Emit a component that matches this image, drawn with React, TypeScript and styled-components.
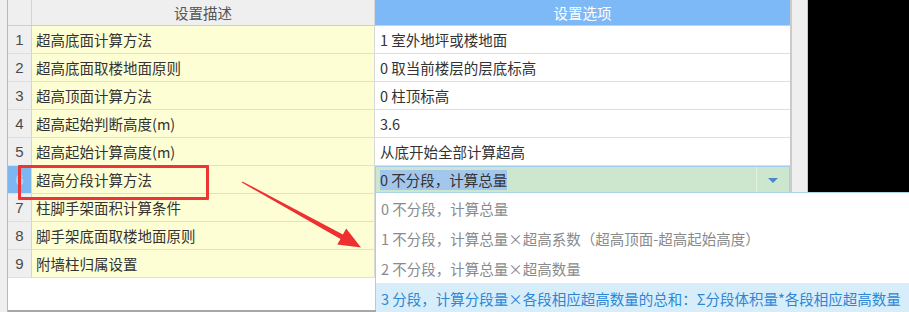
import React from 'react';
import styled, { createGlobalStyle } from 'styled-components';

const GlobalStyle = createGlobalStyle`
	html, body {
		margin: 0;
		padding: 0;
		background: #ffffff;
	}
	body {
		font-family: 'Noto Sans CJK SC', 'Noto Sans', sans-serif;
	}
`;

const Screen = styled.div`
	position: relative;
	width: 909px;
	height: 312px;
	overflow: hidden;
	display: flex;
	background: #ffffff;
	font-size: 14.5px;
	color: #333;
`;

const Gutter = styled.div`
	width: 7px;
	flex-shrink: 0;
	background: #efefef;
	border-right: 1px solid #b9b9b9;
`;

const Table = styled.div`
	width: 782px;
	flex-shrink: 0;
	display: flex;
	flex-direction: column;
	border-right: 2px solid #cbcbcb;
	border-bottom: 2px solid #a8a8a8;
	height: 310px;
`;

const Row = styled.div<{ $head?: boolean }>`
	display: grid;
	grid-template-columns: 24px 343px 1fr;
	height: ${(p) => (p.$head ? 26 : 28)}px;
	box-sizing: border-box;
	border-bottom: 1px solid ${(p) => (p.$head ? '#cfcfcf' : '#dedede')};
`;

const NumCell = styled.div<{ $active?: boolean; $head?: boolean }>`
	display: flex;
	align-items: center;
	justify-content: center;
	background: ${(p) => (p.$active ? '#7db7f1' : '#efefef')};
	color: ${(p) => (p.$active ? '#b9d9f8' : '#4a4a4a')};
	border-right: 1px solid #d4d4d4;
	font-family: 'Liberation Sans', 'Noto Sans CJK SC', sans-serif;
	font-size: 15px;
`;

const DescCell = styled.div<{ $head?: boolean }>`
	display: flex;
	align-items: center;
	justify-content: ${(p) => (p.$head ? 'center' : 'flex-start')};
	padding-left: ${(p) => (p.$head ? 0 : 4)}px;
	background: ${(p) => (p.$head ? '#efefef' : '#fefed5')};
	color: ${(p) => (p.$head ? '#555' : '#333')};
	border-right: 1px solid #d8d8d8;
	white-space: nowrap;
`;

const OptCell = styled.div<{ $head?: boolean }>`
	display: flex;
	align-items: center;
	justify-content: ${(p) => (p.$head ? 'center' : 'flex-start')};
	padding-left: ${(p) => (p.$head ? 0 : 5)}px;
	background: ${(p) => (p.$head ? '#7cb9f6' : '#ffffff')};
	color: ${(p) => (p.$head ? '#ffffff' : '#333')};
	white-space: nowrap;
`;

const EditCell = styled.div`
	display: flex;
	align-items: stretch;
	background: #cde7cf;
	border: 1px solid #a5cdef;
	margin-bottom: -1px;
`;

const EditText = styled.div`
	flex: 1;
	display: flex;
	align-items: center;
	padding-left: 4px;
`;

const Selected = styled.span`
	background: #a3c6ec;
	color: #333;
	line-height: 20px;
`;

const DropButton = styled.div`
	width: 32px;
	display: flex;
	align-items: center;
	justify-content: center;
	border-left: 1px solid #e2efe2;
`;

const Caret = styled.div`
	width: 0;
	height: 0;
	border-left: 5px solid transparent;
	border-right: 5px solid transparent;
	border-top: 5px solid #4d86c6;
`;

const Filler = styled.div`
	flex: 1;
	background: #ffffff;
`;

const ScrollStrip = styled.div`
	width: 15px;
	flex-shrink: 0;
	background: #efefef;
	border-right: 1px solid #c8c8c8;
`;

const Outside = styled.div`
	flex: 1;
	background: #000000;
`;

const Dropdown = styled.div`
	position: absolute;
	left: 375px;
	top: 192px;
	right: 0;
	bottom: 2px;
	background: #ffffff;
	border-left: 1px solid #a8cdee;
	border-top: 1px solid #a8d4ec;
	display: flex;
	flex-direction: column;
`;

const Item = styled.div<{ $hot?: boolean }>`
	height: 30px;
	flex-shrink: 0;
	display: flex;
	align-items: center;
	padding-left: 5px;
	white-space: nowrap;
	background: ${(p) => (p.$hot ? '#d7eefa' : 'transparent')};
	color: ${(p) => (p.$hot ? '#2f86d4' : '#8a8a8a')};
`;

const Callout = styled.div`
	position: absolute;
	left: 18px;
	top: 165px;
	width: 191px;
	height: 35px;
	box-sizing: border-box;
	border: 3px solid #ee3535;
	border-radius: 1px;
`;

const ArrowLayer = styled.svg`
	position: absolute;
	left: 0;
	top: 0;
	pointer-events: none;
`;

type Setting = {
	name: string;
	value: string;
};

const settings: Setting[] = [
	{ name: '超高底面计算方法', value: '1 室外地坪或楼地面' },
	{ name: '超高底面取楼地面原则', value: '0 取当前楼层的层底标高' },
	{ name: '超高顶面计算方法', value: '0 柱顶标高' },
	{ name: '超高起始判断高度(m)', value: '3.6' },
	{ name: '超高起始计算高度(m)', value: '从底开始全部计算超高' },
	{ name: '超高分段计算方法', value: '0 不分段，计算总量' },
	{ name: '柱脚手架面积计算条件', value: '' },
	{ name: '脚手架底面取楼地面原则', value: '' },
	{ name: '附墙柱归属设置', value: '' },
];

const options = [
	'0 不分段，计算总量',
	'1 不分段，计算总量×超高系数（超高顶面-超高起始高度）',
	'2 不分段，计算总量×超高数量',
	'3 分段，计算分段量×各段相应超高数量的总和：Σ分段体积量*各段相应超高数量',
];

const ACTIVE = 5;

export default function App() {
	return (
		<>
			<GlobalStyle />
			<Screen>
				<Gutter />
				<Table>
					<Row $head>
						<NumCell $head />
						<DescCell $head>设置描述</DescCell>
						<OptCell $head>设置选项</OptCell>
					</Row>
					{settings.map((s, i) => (
						<Row key={s.name}>
							<NumCell $active={i === ACTIVE}>{i + 1}</NumCell>
							<DescCell>{s.name}</DescCell>
							{i === ACTIVE ? (
								<EditCell>
									<EditText>
										<Selected>{s.value}</Selected>
									</EditText>
									<DropButton>
										<Caret />
									</DropButton>
								</EditCell>
							) : (
								<OptCell>{s.value}</OptCell>
							)}
						</Row>
					))}
					<Filler />
				</Table>
				<ScrollStrip />
				<Outside />

				<Dropdown>
					{options.map((o, i) => (
						<Item key={o} $hot={i === options.length - 1}>
							{o}
						</Item>
					))}
				</Dropdown>

				<Callout />
				<ArrowLayer width={909} height={312}>
					<polygon
						points="241.8,182.6 340.5,238.9 337.2,244.6 361,247.5 346.2,228.4 342.9,234.4 242.3,181.4"
						fill="#ee3030"
					/>
				</ArrowLayer>
			</Screen>
		</>
	);
}
